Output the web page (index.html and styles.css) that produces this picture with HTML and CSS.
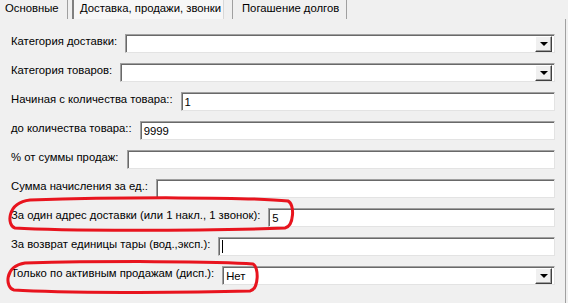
FILE: index.html
```html
<!DOCTYPE html>
<html lang="ru">
<head>
  <meta charset="UTF-8" />
  <title>Доставка, продажи, звонки</title>
  <link rel="stylesheet" href="styles.css">
</head>
<body>

  <div class="tabs">
    <div class="tab tab-first">Основные</div>
    <div class="tab tab-active">Доставка, продажи, звонки</div>
    <div class="tab tab-last">Погашение долгов</div>
  </div>

  <div class="panel">
    <div class="row">
      <span class="lbl">Категория доставки:</span>
      <div class="field combo"><span class="val"></span><span class="btn"></span></div>
    </div>
    <div class="row">
      <span class="lbl">Категория товаров:</span>
      <div class="field combo"><span class="val"></span><span class="btn"></span></div>
    </div>
    <div class="row">
      <span class="lbl">Начиная с количества товара::</span>
      <div class="field"><span class="val">1</span></div>
    </div>
    <div class="row">
      <span class="lbl">до количества товара::</span>
      <div class="field"><span class="val">9999</span></div>
    </div>
    <div class="row">
      <span class="lbl">% от суммы продаж:</span>
      <div class="field"><span class="val"></span></div>
    </div>
    <div class="row">
      <span class="lbl">Сумма начисления за ед.:</span>
      <div class="field"><span class="val"></span></div>
    </div>
    <div class="row">
      <span class="lbl">За один адрес доставки (или 1 накл., 1 звонок):</span>
      <div class="field"><span class="val">5</span></div>
    </div>
    <div class="row">
      <span class="lbl">За возврат единицы тары (вод.,эксп.):</span>
      <div class="field"><span class="val"><i class="caret"></i></span></div>
    </div>
    <div class="row">
      <span class="lbl">Только по активным продажам (дисп.):</span>
      <div class="field combo"><span class="val">Нет</span><span class="btn"></span></div>
    </div>
  </div>

  <svg class="marks" width="568" height="303" viewBox="0 0 568 303">
    <path d="M30 200 C120 197 250 197 288 201 C295 204 294 226 285 228 C200 231 60 231 15 228 C7 226 6 203 30 200 Z" />
    <path d="M25 263 C100 261 220 261 253 264 C259 267 259 289 250 291 C180 293 60 293 14 290 C5 288 4 266 25 263 Z" />
  </svg>

</body>
</html>
```

FILE: styles.css
```css
html, body {
  margin: 0;
  background: #f0f0f0;
  color: #000;
  font-family: "Liberation Sans", Arial, sans-serif;
  font-size: 11.3px;
}
body {
  position: relative;
  width: 568px;
  height: 303px;
  overflow: hidden;
}
.tabs {
  display: flex;
  height: 19px;
}
.tab {
  box-sizing: border-box;
  height: 19px;
  line-height: 17px;
  white-space: nowrap;
}
.tab-first {
  width: 68px;
  padding-left: 5px;
  border-right: 1px solid #a0a0a0;
}
.tab-active {
  margin-left: 4px;
  width: 152px;
  padding-left: 6px;
  background: #f7f7f7;
  border-left: 2px solid #808080;
  border-right: 1px solid #d8d8d8;
}
.tab-last {
  margin-left: 8px;
  width: 115px;
  padding-left: 9px;
  border-left: 1px solid #a0a0a0;
  border-right: 1px solid #a0a0a0;
}
.panel {
  box-sizing: border-box;
  width: 566px;
  height: 284px;
  padding: 15px 10px 0 11px;
  border-right: 1px solid #a0a0a0;
}
.row {
  display: flex;
  align-items: flex-start;
  height: 29px;
}
.lbl {
  flex: none;
  white-space: nowrap;
  padding-top: 1px;
  margin-right: 8px;
}
.field {
  flex: 1;
  box-sizing: border-box;
  height: 19px;
  display: flex;
  align-items: center;
  background: #fff;
  border-top: 1px solid #a0a0a0;
  border-left: 1px solid #a0a0a0;
  border-bottom: 1px solid #e3e3e3;
  border-right: 1px solid #e3e3e3;
  box-shadow: inset 1px 1px 0 #696969;
}
.val {
  flex: 1;
  padding-left: 3px;
  padding-top: 2px;
  height: 15px;
  line-height: 15px;
}
.caret {
  display: inline-block;
  width: 1px;
  height: 13px;
  background: #000;
  vertical-align: top;
}
.btn {
  position: relative;
  flex: none;
  box-sizing: border-box;
  width: 17px;
  height: 16px;
  margin: 1px 2px 0 0;
  background: #f0f0f0;
  border-top: 1px solid #fff;
  border-left: 1px solid #fff;
  border-right: 1px solid #404040;
  border-bottom: 1px solid #404040;
  box-shadow: inset -1px -1px 0 #a0a0a0;
}
.btn::after {
  content: "";
  position: absolute;
  left: 4px;
  top: 5px;
  border-left: 4px solid transparent;
  border-right: 4px solid transparent;
  border-top: 4px solid #000;
}
.marks {
  position: absolute;
  left: 0;
  top: 0;
  pointer-events: none;
}
.marks path {
  fill: none;
  stroke: #e8141e;
  stroke-width: 3;
}
```
